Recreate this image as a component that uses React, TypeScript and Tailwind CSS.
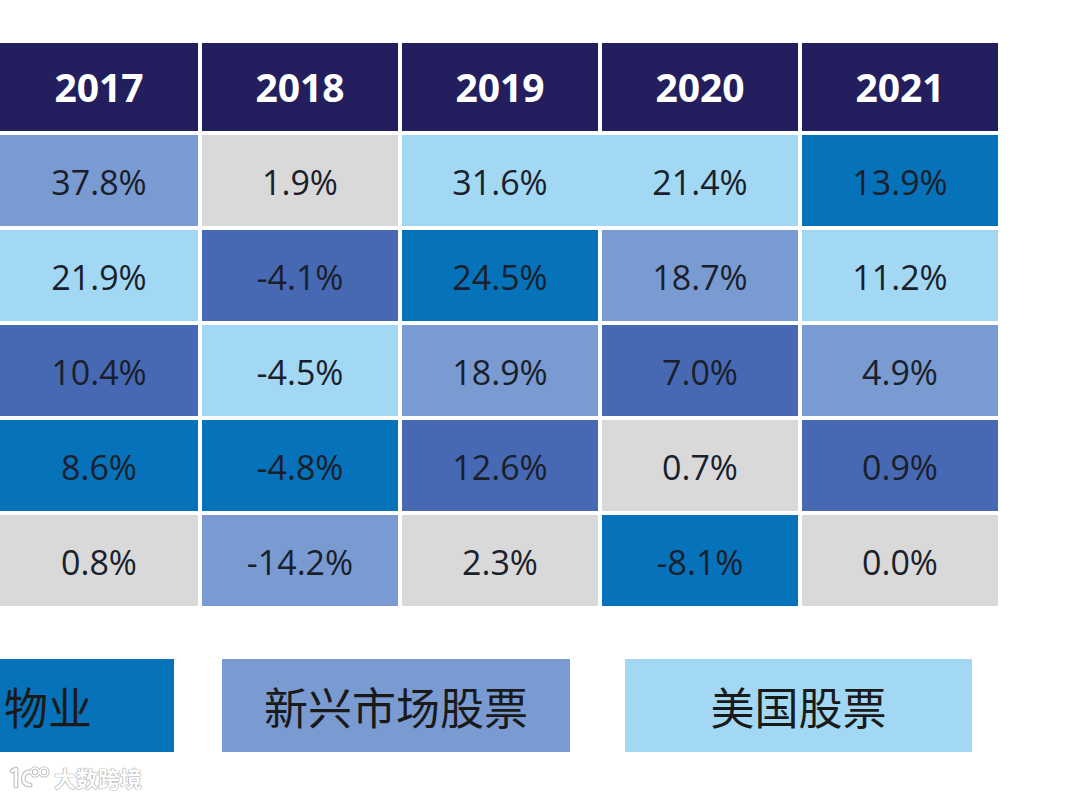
const years = ["2017", "2018", "2019", "2020", "2021"];

const tones: Record<string, string> = {
  peri: "bg-[#7a9bd1]",
  gray: "bg-[#d9d9d9]",
  light: "bg-[#a2d8f4]",
  strong: "bg-[#0572ba]",
  mid: "bg-[#4769b4]",
};

type Cell = { value: string; tone: string };

const rows: Cell[][] = [
  [
    { value: "37.8%", tone: "peri" },
    { value: "1.9%", tone: "gray" },
    { value: "31.6%", tone: "light" },
    { value: "21.4%", tone: "light" },
    { value: "13.9%", tone: "strong" },
  ],
  [
    { value: "21.9%", tone: "light" },
    { value: "-4.1%", tone: "mid" },
    { value: "24.5%", tone: "strong" },
    { value: "18.7%", tone: "peri" },
    { value: "11.2%", tone: "light" },
  ],
  [
    { value: "10.4%", tone: "mid" },
    { value: "-4.5%", tone: "light" },
    { value: "18.9%", tone: "peri" },
    { value: "7.0%", tone: "mid" },
    { value: "4.9%", tone: "peri" },
  ],
  [
    { value: "8.6%", tone: "strong" },
    { value: "-4.8%", tone: "strong" },
    { value: "12.6%", tone: "mid" },
    { value: "0.7%", tone: "gray" },
    { value: "0.9%", tone: "mid" },
  ],
  [
    { value: "0.8%", tone: "gray" },
    { value: "-14.2%", tone: "peri" },
    { value: "2.3%", tone: "gray" },
    { value: "-8.1%", tone: "strong" },
    { value: "0.0%", tone: "gray" },
  ],
];

const numFont = "font-['Open_Sans','Liberation_Sans',sans-serif]";
const cjkFont = "font-['Noto_Sans_CJK_SC','Noto_Sans',sans-serif]";
const cellText = "flex items-center justify-center pt-[4px] text-[34px] text-[#1a1f2c]";

export default function App() {
  return (
    <div className="w-[1080px] h-[801px] bg-white overflow-hidden pt-[43px]">
      {/* Returns grid */}
      <div
        className={`grid grid-cols-[198px_196px_196px_196px_196px] grid-rows-[88px_repeat(5,91px)] gap-[4px] ${numFont}`}
      >
        {years.map((y) => (
          <div
            key={y}
            className="bg-[#231f5e] flex items-center justify-center text-white font-bold text-[39px]"
          >
            {y}
          </div>
        ))}

        {rows.map((row, r) =>
          row.map((cell, c) => {
            // 2019 and 2020 share one block in the first row
            if (r === 0 && c === 3) return null;
            if (r === 0 && c === 2) {
              return (
                <div
                  key={`${r}-${c}`}
                  className={`col-span-2 grid grid-cols-2 gap-[4px] ${tones.light}`}
                >
                  <div className={cellText}>{cell.value}</div>
                  <div className={cellText}>{row[3].value}</div>
                </div>
              );
            }
            return (
              <div key={`${r}-${c}`} className={`${cellText} ${tones[cell.tone]}`}>
                {cell.value}
              </div>
            );
          })
        )}
      </div>

      {/* Legend */}
      <div className={`flex mt-[53px] h-[93px] ${cjkFont} text-[44px] text-[#1a1a1a]`}>
        <div className="w-[174px] bg-[#0572ba] flex items-center pl-[4px]">物业</div>
        <div className="w-[348px] ml-[48px] bg-[#7a9bd1] flex items-center justify-center">
          新兴市场股票
        </div>
        <div className="w-[347px] ml-[55px] bg-[#a2d8f4] flex items-center justify-center">
          美国股票
        </div>
      </div>

      {/* Watermark */}
      <div className="flex items-center gap-[3px] mt-[12px] ml-[9px]">
        <svg width="42" height="26" viewBox="0 0 42 26" fill="none">
          <g stroke="#c4c4c4" strokeWidth="5" strokeLinecap="round" strokeLinejoin="round">
            <path d="M3 7 L7 5 L7 22" />
            <path d="M21 8 C13 7 11 21 21 21" />
            <circle cx="26" cy="8" r="4" strokeWidth="3.5" />
            <circle cx="35" cy="8" r="4" strokeWidth="3.5" />
          </g>
          <g stroke="#ffffff" strokeWidth="2.5" strokeLinecap="round" strokeLinejoin="round">
            <path d="M3 7 L7 5 L7 22" />
            <path d="M21 8 C13 7 11 21 21 21" />
            <circle cx="26" cy="8" r="4" strokeWidth="1.5" />
            <circle cx="35" cy="8" r="4" strokeWidth="1.5" />
          </g>
        </svg>
        <span
          className={`${cjkFont} font-bold text-[22px] leading-none text-white [text-shadow:0_0_1px_#9a9a9a,0_0_1px_#9a9a9a,0_0_1px_#9a9a9a]`}
        >
          大数跨境
        </span>
      </div>
    </div>
  );
}
